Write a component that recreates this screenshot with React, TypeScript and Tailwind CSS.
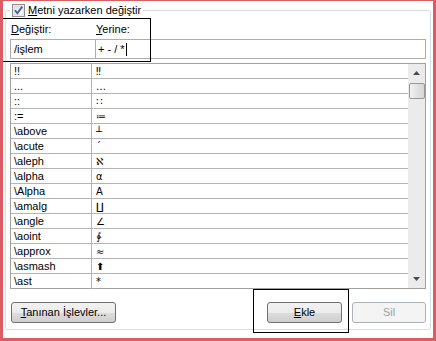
const rows: [string, string][] = [
  ["!!", "\u203C"],
  ["...", "\u2026"],
  ["::", "\u2237"],
  [":=", "\u2254"],
  ["\\above", "\u2534"],
  ["\\acute", "\u00B4"],
  ["\\aleph", "\u2135"],
  ["\\alpha", "\u03B1"],
  ["\\Alpha", "\u0391"],
  ["\\amalg", "\u2210"],
  ["\\angle", "\u2220"],
  ["\\aoint", "\u2233"],
  ["\\approx", "\u2248"],
  ["\\asmash", "\u2B06"],
  ["\\ast", "*"],
];

function CheckBox() {
  return (
    <svg width="13" height="13" viewBox="0 0 13 13" className="shrink-0">
      <defs>
        <linearGradient id="cb" x1="0" y1="0" x2="1" y2="1">
          <stop offset="0" stopColor="#dcdcdc" />
          <stop offset="1" stopColor="#ffffff" />
        </linearGradient>
      </defs>
      <rect x="0.5" y="0.5" width="12" height="12" fill="#f4f4f4" stroke="#8e8f8f" />
      <rect x="2" y="2" width="9" height="9" fill="url(#cb)" stroke="#c6c6c6" strokeWidth="0.5" />
      <path d="M3 6.2 L5.4 9.2 L10.2 2.6" fill="none" stroke="#4a5f97" strokeWidth="1.8" />
    </svg>
  );
}

function Btn({ children, className = "", disabled = false }: { children: React.ReactNode; className?: string; disabled?: boolean }) {
  return (
    <div
      className={`flex h-[21px] items-center justify-center rounded-[3px] border text-[11px] ${
        disabled
          ? "border-[#adb2b5] bg-[#f4f4f4] text-[#a0a0a0]"
          : "border-[#707070] bg-[linear-gradient(#f2f2f2_0%,#ebebeb_50%,#dddddd_50%,#cfcfcf_100%)] text-black"
      } ${className}`}
    >
      {children}
    </div>
  );
}

function Arrow({ up }: { up: boolean }) {
  return (
    <svg width="7" height="4" viewBox="0 0 7 4">
      <path d={up ? "M0 4 L3.5 0 L7 4 Z" : "M0 0 L3.5 4 L7 0 Z"} fill="#4d4d4d" />
    </svg>
  );
}

export default function App() {
  return (
    <div
      className="relative h-[341px] w-[436px] overflow-hidden border-b-[3px] border-l-[3px] border-r-[3px] border-t border-[#dc5c64] bg-white text-black"
      style={{ fontFamily: '"Liberation Sans", Arial, sans-serif' }}
    >
      <fieldset className="ml-[2px] mr-[2px] h-[329px] rounded-[2px] border border-[#d5dfe5] px-[4px]">
        <legend className="flex h-[18px] items-center gap-[3px] pl-[2px] pr-[2px] text-[11px]">
          <CheckBox />
          <span>
            <span className="underline">M</span>etni yazarken değiştir
          </span>
        </legend>

        <div className="mt-[2px] flex h-[16px] items-center text-[11px] leading-[16px]">
          <div className="w-[85px] pl-[1px]">
            <span className="underline">D</span>eğiştir:
          </div>
          <div className="pl-[1px]">
            <span className="underline">Y</span>erine:
          </div>
        </div>

        <div className="mt-[2px] flex h-[20px] text-[11px]">
          <div className="flex w-[86px] items-center border border-[#abadb3] pl-[3px]">/işlem</div>
          <div className="-ml-px flex flex-1 items-center border border-[#abadb3] pl-[2px]">
            <span>+ - / *</span>
            <span className="ml-[1px] h-[13px] w-px bg-black" />
          </div>
        </div>

        <div className="mt-[4px] flex h-[226px] border border-[#a0a0a0] text-[11px]">
          <div className="flex-1">
            {rows.map(([a, b], i) => (
              <div
                key={a}
                className={`flex h-[15px] items-center ${i < rows.length - 1 ? "border-b border-[#b4b4b4]" : ""}`}
              >
                <div className="flex h-full w-[81px] items-center border-r border-[#b4b4b4] pl-[3px]">{a}</div>
                <div className="pl-[4px] text-[10px]" style={{ fontFamily: '"DejaVu Sans", sans-serif' }}>
                  {b}
                </div>
              </div>
            ))}
          </div>
          <div className="flex w-[17px] flex-col items-center bg-[#ebebeb]">
            <div className="flex h-[18px] w-full items-center justify-center">
              <Arrow up />
            </div>
            <div className="mt-[1px] h-[16px] w-[16px] rounded-[2px] border border-[#979797] bg-[linear-gradient(90deg,#f3f3f3,#e2e2e2_50%,#d6d6d6)]" />
            <div className="flex-1" />
            <div className="flex h-[18px] w-full items-center justify-center">
              <Arrow up={false} />
            </div>
          </div>
        </div>

        <div className="mt-[13px] flex items-center">
          <Btn className="ml-[1px] w-[105px]">
            <span>
              <span className="underline">T</span>anınan İşlevler...
            </span>
          </Btn>
          <div className="flex-1" />
          <Btn className="w-[75px]">
            <span>
              <span className="underline">E</span>kle
            </span>
          </Btn>
          <Btn disabled className="ml-[10px] w-[74px]">
            Sil
          </Btn>
        </div>
      </fieldset>

      <div className="pointer-events-none absolute left-[-2px] top-[17px] h-[44px] w-[150px] border border-black" />
      <div className="pointer-events-none absolute left-[250px] top-[288px] h-[44px] w-[96px] border border-black" />
    </div>
  );
}
